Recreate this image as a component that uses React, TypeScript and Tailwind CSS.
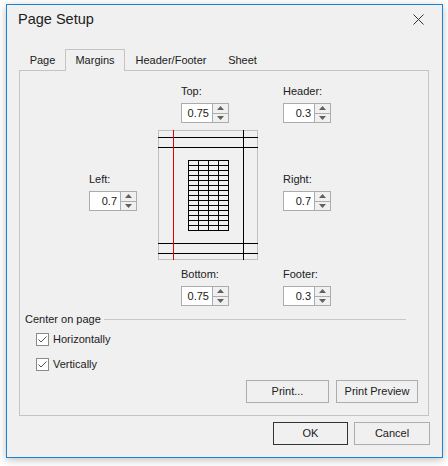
import React from 'react';

const Spin = ({ value }: { value: string }) => (
  <div className="flex h-[20px] w-[48px] border border-[#acacac] bg-white">
    <div className="flex-1 pr-[3px] text-right leading-[18px]">{value}</div>
    <div className="flex w-[16px] flex-col border-l border-[#acacac] bg-[#f0f0f0]">
      <div className="flex flex-1 items-center justify-center border-b border-[#acacac]">
        <svg width="7" height="4" viewBox="0 0 7 4">
          <path d="M0 4 L3.5 0 L7 4Z" fill="#606060" />
        </svg>
      </div>
      <div className="flex flex-1 items-center justify-center">
        <svg width="7" height="4" viewBox="0 0 7 4">
          <path d="M0 0 L3.5 4 L7 0Z" fill="#606060" />
        </svg>
      </div>
    </div>
  </div>
);

const Field = ({ label, value }: { label: string; value: string }) => (
  <div className="flex flex-col gap-[4px]">
    <span className="leading-[15px]">{label}</span>
    <Spin value={value} />
  </div>
);

const Check = ({ label }: { label: string }) => (
  <div className="flex h-[17px] items-center">
    <div className="flex h-[13px] w-[13px] items-center justify-center border border-[#8a8a8a] bg-white">
      <svg width="11" height="11" viewBox="0 0 11 11">
        <path d="M1.5 5.5 L4 8 L9.5 2.5" fill="none" stroke="#555" strokeWidth="1" />
      </svg>
    </div>
    <span className="ml-[4px] leading-[15px]">{label}</span>
  </div>
);

const PagePreview = () => {
  const rows = Array.from({ length: 13 }, (_, i) => 35.5 + i * 5);
  return (
    <svg width="100" height="130" viewBox="0 0 100 130">
      <rect x="0.5" y="0.5" width="99" height="129" fill="#f0f0f0" stroke="#c0c0c0" />
      {[7.5, 17.5, 113.5, 123.5].map((y) => (
        <line key={y} x1="0" y1={y} x2="100" y2={y} stroke="#000" />
      ))}
      <line x1="85.5" y1="0" x2="85.5" y2="130" stroke="#000" />
      <rect x="30.5" y="30.5" width="40" height="70" fill="none" stroke="#000" />
      {[40.5, 50.5, 60.5].map((x) => (
        <line key={x} x1={x} y1="30" x2={x} y2="101" stroke="#000" />
      ))}
      {rows.map((y) => (
        <line key={y} x1="30" y1={y} x2="71" y2={y} stroke="#000" />
      ))}
      <line x1="15.5" y1="0" x2="15.5" y2="130" stroke="#e00000" />
    </svg>
  );
};

const tabs = [
  { name: 'Page', w: 'w-[45px]' },
  { name: 'Margins', w: 'w-[60px]', active: true },
  { name: 'Header/Footer', w: 'w-[92px]' },
  { name: 'Sheet', w: 'w-[51px]' },
];

export default function App() {
  return (
    <div className="h-[466px] w-[448px] bg-white pl-[6px] pt-[4px] font-['Liberation_Sans',Arial,sans-serif] text-[11px] text-[#202020]">
      <div className="flex h-[454px] w-[437px] flex-col border border-[#1883d7] bg-[#f0f0f0] shadow-[0_2px_8px_rgba(0,0,0,0.25)]">
        {/* title bar */}
        <div className="mt-[4px] flex h-[20px] items-center pl-[11px] pr-[18px]">
          <span className="flex-1 text-[14.5px] leading-[20px]">Page Setup</span>
          <svg width="11" height="11" viewBox="0 0 11 11">
            <path d="M0.5 0.5 L10.5 10.5 M10.5 0.5 L0.5 10.5" stroke="#333" strokeWidth="1" />
          </svg>
        </div>

        {/* tabs */}
        <div className="relative z-10 -mb-px ml-[13px] mt-[20px] flex h-[22px]">
          {tabs.map((t) => (
            <div
              key={t.name}
              className={`${t.w} flex justify-center border-x border-t pt-[3px] leading-[15px] ${
                t.active ? 'border-[#c4c4c4] bg-[#f0f0f0]' : 'border-transparent'
              }`}
            >
              {t.name}
            </div>
          ))}
        </div>

        {/* margins panel */}
        <div className="ml-[12px] flex h-[346px] w-[410px] flex-col border border-[#c4c4c4]">
          <div className="ml-[69px] mt-[13px] grid grid-cols-[69px_100px_auto] gap-y-[7px]">
            <div />
            <div className="pl-[23px]">
              <Field label="Top:" value="0.75" />
            </div>
            <div className="pl-[25px]">
              <Field label="Header:" value="0.3" />
            </div>

            <div className="pt-[42px]">
              <Field label="Left:" value="0.7" />
            </div>
            <PagePreview />
            <div className="pl-[25px] pt-[42px]">
              <Field label="Right:" value="0.7" />
            </div>

            <div />
            <div className="pl-[23px]">
              <Field label="Bottom:" value="0.75" />
            </div>
            <div className="pl-[25px]">
              <Field label="Footer:" value="0.3" />
            </div>
          </div>

          <div className="mt-[6px] flex items-center gap-[3px] pl-[5px] pr-[22px]">
            <span className="leading-[15px]">Center on page</span>
            <div className="h-px flex-1 bg-[#c8c8c8]" />
          </div>
          <div className="mt-[4px] flex flex-col gap-[8px] pl-[16px]">
            <Check label="Horizontally" />
            <Check label="Vertically" />
          </div>

          <div className="mt-auto flex justify-end gap-[7px] pb-[12px] pr-[10px]">
            <button className="h-[23px] w-[83px] border border-[#adadad] bg-[#f0f0f0]">Print...</button>
            <button className="h-[23px] w-[82px] border border-[#adadad] bg-[#f0f0f0]">Print Preview</button>
          </div>
        </div>

        {/* dialog buttons */}
        <div className="mt-[6px] flex justify-end gap-[6px] pr-[12px]">
          <button className="h-[23px] w-[75px] border border-[#333] bg-[#f0f0f0]">OK</button>
          <button className="h-[23px] w-[76px] border border-[#adadad] bg-[#f0f0f0]">Cancel</button>
        </div>
      </div>
    </div>
  );
}
